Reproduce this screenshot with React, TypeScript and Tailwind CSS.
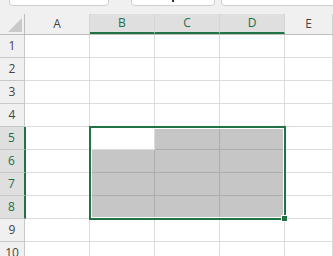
import React from 'react';

const cols = ['A', 'B', 'C', 'D', 'E'];
const colW = ['w-[65px]', 'w-[65px]', 'w-[65px]', 'w-[65px]', 'flex-1'];
const rows = [1, 2, 3, 4, 5, 6, 7, 8, 9, 10];

// selected range B5:D8, active cell B5
const inRange = (r: number, c: number) => r >= 5 && r <= 8 && c >= 1 && c <= 3;

export default function App() {
  return (
    <div
      className="relative w-[333px] h-[256px] overflow-hidden bg-white text-[12px] text-[#444]"
      style={{ fontFamily: '"Open Sans", "Noto Sans", sans-serif' }}
    >
      {/* ribbon strip */}
      <div className="flex h-[14px] bg-[#f0f0f0] pl-[9px] overflow-hidden">
        <div className="w-[100px] h-[10px] -mt-[4px] shrink-0 bg-white border border-[#cfcfcf] rounded-[4px]" />
        <div className="w-[84px] h-[10px] -mt-[4px] ml-[22px] shrink-0 flex justify-center items-end pb-[3px] bg-white border border-[#cfcfcf] rounded-[4px]">
          <div className="w-[2px] h-[2px] bg-[#333]" />
        </div>
        <div className="w-[130px] h-[10px] -mt-[4px] ml-[6px] shrink-0 bg-white border border-[#cfcfcf] rounded-[4px]" />
      </div>

      {/* column headers */}
      <div className="flex h-[21px] bg-[#f0f0f0] border-b border-[#bdbdbd]">
        <div className="w-[25px] shrink-0 flex items-end justify-end pr-[1px] pb-[1px] border-r border-[#bdbdbd]">
          <svg width="16" height="16" viewBox="0 0 16 16">
            <polygon points="15,1 15,15 1,15" fill="#c9c9c9" />
          </svg>
        </div>
        {cols.map((c, i) => {
          const sel = i >= 1 && i <= 3;
          return (
            <div
              key={c}
              className={`${colW[i]} shrink-0 flex items-center justify-center border-r border-[#d4d4d4] ${
                sel ? 'bg-[#dfdfdf] text-[#1e6e45] border-b-2 border-b-[#217346]' : ''
              }`}
            >
              {c}
            </div>
          );
        })}
      </div>

      {/* rows */}
      {rows.map((r) => {
        const rowSel = r >= 5 && r <= 8;
        return (
          <div key={r} className="flex h-[23px]">
            <div
              className={`shrink-0 flex items-center justify-center border-b border-[#c8c8c8] ${
                rowSel
                  ? 'relative z-10 w-[26px] mr-[-1px] pr-[1px] bg-[#dfdfdf] text-[#1e6e45] border-r-2 border-r-[#217346]'
                  : 'w-[25px] bg-[#f0f0f0] border-r'
              }`}
            >
              {r}
            </div>
            {cols.map((c, i) => {
              const sel = inRange(r, i);
              const active = r === 5 && i === 1;
              const fill = sel && !active;
              return (
                <div
                  key={c}
                  className={`${colW[i]} shrink-0 border-r border-b ${
                    fill ? 'bg-[#c6c6c6] border-[#adadad]' : 'bg-white border-[#dcdcdc]'
                  }`}
                />
              );
            })}
          </div>
        );
      })}

      {/* selection outline and fill handle */}
      <div className="absolute left-[89px] top-[126px] w-[197px] h-[94px] border-2 border-[#217346] shadow-[inset_0_0_0_1px_#ffffff]" />
      <div className="absolute left-[281px] top-[215px] w-[7px] h-[7px] bg-[#217346] border border-white" />
    </div>
  );
}
